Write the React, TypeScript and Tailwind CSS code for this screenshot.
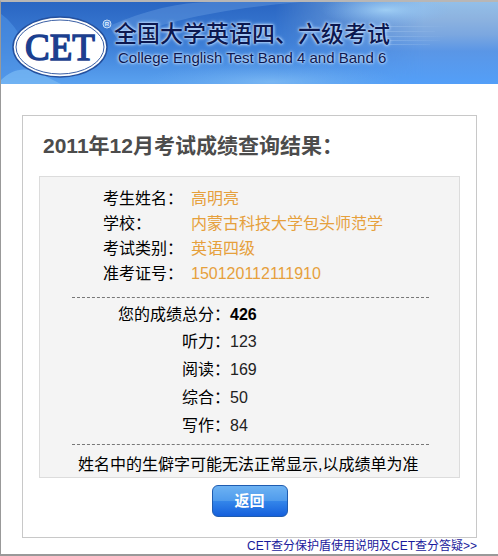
const details = [
  { label: '考生姓名：', value: '高明亮' },
  { label: '学校：', value: '内蒙古科技大学包头师范学' },
  { label: '考试类别：', value: '英语四级' },
  { label: '准考证号：', value: '150120112111910' },
];

const scores = [
  { label: '听力：', value: 123 },
  { label: '阅读：', value: 169 },
  { label: '综合：', value: 50 },
  { label: '写作：', value: 84 },
];

function Sky() {
  return (
    <svg
      className="absolute inset-0 h-full w-full"
      viewBox="0 0 497 82"
      preserveAspectRatio="none"
      aria-hidden="true"
    >
      <defs>
        <linearGradient id="base" x1="0" y1="0" x2="0" y2="1">
          <stop offset="0" stopColor="#2a66c2" />
          <stop offset="0.5" stopColor="#3c7dd6" />
          <stop offset="1" stopColor="#5aa2f0" />
        </linearGradient>
        <linearGradient id="right" x1="0" y1="0" x2="0" y2="1">
          <stop offset="0" stopColor="#93bfe8" />
          <stop offset="0.2" stopColor="#8db3e0" />
          <stop offset="0.4" stopColor="#7ba7e0" />
          <stop offset="0.6" stopColor="#5a96e6" />
          <stop offset="1" stopColor="#539ff8" />
        </linearGradient>
        <linearGradient id="fade" x1="0" y1="0" x2="1" y2="0">
          <stop offset="0.55" stopColor="#fff" stopOpacity="0" />
          <stop offset="0.85" stopColor="#fff" />
        </linearGradient>
        <mask id="rightMask">
          <rect width="497" height="82" fill="url(#fade)" />
        </mask>
        <radialGradient id="glow">
          <stop offset="0" stopColor="#a9d8fa" stopOpacity="0.8" />
          <stop offset="1" stopColor="#7fb6f2" stopOpacity="0" />
        </radialGradient>
        <linearGradient id="streak" x1="0" y1="0" x2="1" y2="0">
          <stop offset="0" stopColor="#b5d4f5" stopOpacity="0.35" />
          <stop offset="1" stopColor="#b5d4f5" stopOpacity="0" />
        </linearGradient>
      </defs>
      <rect width="497" height="82" fill="url(#base)" />
      <path d="M108 24C145 8 178 0 210 0H300C230 6 160 18 118 40Z" fill="#76aae7" opacity="0.35" />
      <path d="M0 12C14 22 24 38 24 60L0 78Z" fill="#4f92e4" opacity="0.6" />
      <path d="M0 78C12 66 26 64 42 73L60 82H0Z" fill="#7dbcf5" opacity="0.65" />
      <rect width="497" height="82" fill="url(#right)" mask="url(#rightMask)" />
      <ellipse cx="385" cy="8" rx="65" ry="16" fill="url(#glow)" />
      <ellipse cx="270" cy="80" rx="130" ry="20" fill="url(#glow)" opacity="0.5" />
      <path
        d="M384 24h62v1h-62zM384 29h50v1h-50zM384 34h60v1h-60zM384 38h55v1h-55zM384 42h45v1h-45z"
        fill="url(#streak)"
      />
    </svg>
  );
}

function Logo() {
  return (
    <svg className="h-[67px] w-[103px] shrink-0" viewBox="0 0 103 67" role="img" aria-label="CET">
      <ellipse cx="49" cy="33" rx="47" ry="30" fill="#fff" stroke="#24509e" strokeWidth="1.5" />
      <ellipse cx="49" cy="33" rx="44" ry="27" fill="none" stroke="#3a5fa5" strokeWidth="1" />
      <text
        x="49"
        y="46"
        textAnchor="middle"
        fontFamily="Liberation Serif, serif"
        fontSize="37"
        fill="#1b3f8f"
        stroke="#1b3f8f"
        strokeWidth="1.4"
      >
        CET
      </text>
      <circle cx="96" cy="10" r="4" fill="#4f8bdc" stroke="#c7dcf5" strokeWidth="1" />
      <text
        x="96"
        y="12"
        textAnchor="middle"
        fontFamily="Liberation Sans, sans-serif"
        fontSize="6"
        fontWeight="bold"
        fill="#e3effc"
      >
        R
      </text>
    </svg>
  );
}

export default function App() {
  return (
    <div className="flex min-h-screen flex-col border-t-2 border-b-2 border-l border-t-[#b8b6b5] border-b-[#999] border-l-[#999] bg-white font-['Liberation_Sans','Noto_Sans_CJK_SC',sans-serif] text-base text-black">
      <header className="relative h-[82px] overflow-hidden">
        <Sky />
        <div className="relative flex items-start pt-3 pl-2.5">
          <Logo />
          <div className="whitespace-nowrap text-[#0c1850] [text-shadow:0_0_2px_#c4defc,0_0_3px_#c4defc,0_0_4px_#a9cffa]">
            <h1 className="pt-1 text-[23px] leading-8 font-medium">全国大学英语四、六级考试</h1>
            <p className="pl-1 text-[15px] leading-4">College English Test Band 4 and Band 6</p>
          </div>
        </div>
      </header>

      <main className="px-[21px] pt-[31px]">
        <section className="border border-[#c8c8c8] px-4 pb-5">
          <h2 className="py-4 pl-1 text-[21px] leading-7 font-bold text-[#4c4c4c]">
            2011年12月考试成绩查询结果：
          </h2>

          <div className="border border-[#dcdcdc] bg-[#f4f4f4] pt-[9px] pr-[30px] pl-8">
            <table className="ml-[31px]">
              <tbody>
                {details.map((row) => (
                  <tr key={row.label} className="h-[25px]">
                    <th scope="row" className="w-[88px] p-0 text-left leading-6 font-normal whitespace-nowrap">
                      {row.label}
                    </th>
                    <td className="p-0 leading-6 whitespace-nowrap text-[#e6a03c]">{row.value}</td>
                  </tr>
                ))}
              </tbody>
            </table>

            <hr className="mt-[11px] border-t border-dashed border-[#777]" />

            <table className="mt-1">
              <tbody>
                <tr className="h-[26px]">
                  <th scope="row" className="w-[158px] p-0 text-right leading-6 font-normal whitespace-nowrap">
                    您的成绩总分：
                  </th>
                  <td className="p-0 leading-6 font-bold">426</td>
                </tr>
                {scores.map((row) => (
                  <tr key={row.label} className="h-7">
                    <th scope="row" className="p-0 text-right leading-6 font-normal whitespace-nowrap">
                      {row.label}
                    </th>
                    <td className="p-0 leading-6 text-[#222]">{row.value}</td>
                  </tr>
                ))}
              </tbody>
            </table>

            <hr className="mt-1 border-t border-dashed border-[#777]" />

            <p className="pt-2 pl-1.5 leading-6 whitespace-nowrap">
              姓名中的生僻字可能无法正常显示,以成绩单为准
            </p>
          </div>

          <div className="flex justify-center pt-[7px]">
            <button
              type="button"
              className="h-8 w-[76px] rounded-md border border-[#1f5cb0] bg-[linear-gradient(#6db2f3,#4f9bec_50%,#3486ea_50%,#1560dc)] text-[15px] leading-7 font-bold text-white"
            >
              返回
            </button>
          </div>
        </section>

        <p className="text-right text-xs leading-4">
          <a href="#help" className="text-[#1a1a9c]">
            CET查分保护盾使用说明及CET查分答疑&gt;&gt;
          </a>
        </p>
      </main>
    </div>
  );
}
